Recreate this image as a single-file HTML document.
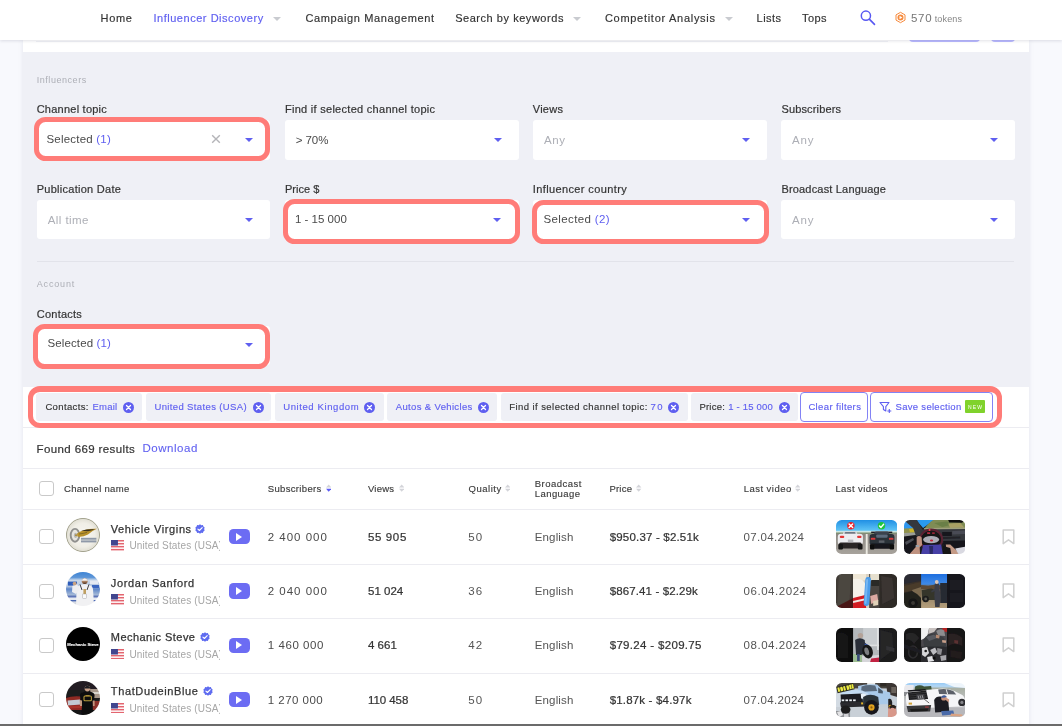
<!DOCTYPE html>
<html><head><meta charset="utf-8"><title>Influencer Discovery</title>
<style>
*{box-sizing:border-box;margin:0;padding:0}
html,body{width:1062px;height:726px;overflow:hidden}
body{background:#f8f9fd;font-family:"Liberation Sans",sans-serif;position:relative}
.a{position:absolute}
.t{position:absolute;white-space:nowrap;line-height:14px;height:14px;display:block;z-index:6}
.nav{left:0;top:0;width:1062px;height:40px;background:#fff;box-shadow:0 1px 3px rgba(40,40,80,.14);z-index:5}
.strip{left:23px;top:40px;width:1006px;height:12px;background:#fff}
.panel{left:23px;top:52px;width:1006px;height:335px;background:#eff0f6}
.white{left:23px;top:387px;width:1006px;height:339px;background:#fff}
.card{left:23px;top:40px;width:1006px;height:700px;box-shadow:0 0 5px rgba(90,100,140,.13)}
#tx{position:absolute;left:0;top:0;width:1062px;height:726px;z-index:6;will-change:transform}
.sel{height:39.6px;width:233.4px;background:#fff;border-radius:3px}
.hl{border:5.5px solid #ff7c78;border-radius:11.5px;z-index:4}
.arr{width:0;height:0;border-left:4px solid transparent;border-right:4px solid transparent;border-top:4.2px solid #5f5ff0}
.car{width:0;height:0;border-left:4px solid transparent;border-right:4px solid transparent;border-top:4px solid #c9cbd0}
.hr{height:1px;background:#ececf1}
.chip{top:393.1px;height:27.8px;background:#eff0f6;border-radius:3px}
.btn{top:392px;height:30px;background:#fff;border:1px solid #8383f5;border-radius:4px}
.cb{width:15px;height:15px;border:1.5px solid #c9c9c9;border-radius:3px;background:#fff}
.av{width:34px;height:34px;will-change:transform}
.th{width:61.3px;height:34px}
.cov{left:220px;width:8px;height:14px;background:#fff;z-index:7}
</style></head><body>
<div class="a nav"></div>
<div class="a card"></div>
<div class="a strip"></div>
<div class="a panel"></div>
<div class="a white"></div>
<div class="a" style="left:36px;top:40.5px;width:852px;height:1.5px;background:#f1f2f6"></div>
<div class="a" style="left:909px;top:38px;width:71px;height:4px;background:#b9b9ff;border-radius:0 0 4px 4px"></div>
<div class="a" style="left:991px;top:38px;width:24px;height:4px;background:#b9b9ff;border-radius:0 0 4px 4px"></div>
<div class="a car" style="left:273.3px;top:17px;z-index:6"></div>
<div class="a car" style="left:572.8px;top:17px;z-index:6"></div>
<div class="a car" style="left:725.2px;top:17px;z-index:6"></div>
<svg class="a" style="left:859px;top:9px;z-index:6" width="18" height="18" viewBox="0 0 18 18"><circle cx="6.9" cy="6.7" r="4.6" fill="none" stroke="#5858f2" stroke-width="1.5"/><path d="M10.3 10.1 L15.5 15.4" stroke="#5858f2" stroke-width="1.6" stroke-linecap="round"/></svg>
<svg class="a" style="left:894px;top:11.2px;z-index:6" width="13" height="13" viewBox="0 0 13 13"><path d="M6.5 1.3 L11 3.9 V9.1 L6.5 11.7 L2 9.1 V3.9 Z" fill="#fff" stroke="#f78a3c" stroke-width="1" stroke-linejoin="round"/><circle cx="6.5" cy="6.5" r="3.0" fill="#f78a3c"/><path d="M5.5 4.7 L8.4 6.5 L5.5 8.3 Z" fill="#fff"/></svg>
<div class="a sel" style="left:37.1px;top:120px"></div>
<div class="a arr" style="left:245.4px;top:137.6px"></div>
<div class="a sel" style="left:37.1px;top:199.9px"></div>
<div class="a arr" style="left:245.2px;top:217.9px"></div>
<div class="a sel" style="left:285.2px;top:120px"></div>
<div class="a arr" style="left:493.5px;top:137.6px"></div>
<div class="a sel" style="left:285.2px;top:199.9px"></div>
<div class="a arr" style="left:493.29999999999995px;top:217.9px"></div>
<div class="a sel" style="left:533.4px;top:120px"></div>
<div class="a arr" style="left:741.7px;top:137.6px"></div>
<div class="a sel" style="left:533.4px;top:199.9px"></div>
<div class="a arr" style="left:741.5px;top:217.9px"></div>
<div class="a sel" style="left:781.4px;top:120px"></div>
<div class="a arr" style="left:989.7px;top:137.6px"></div>
<div class="a sel" style="left:781.4px;top:199.9px"></div>
<div class="a arr" style="left:989.5px;top:217.9px"></div>
<div class="a sel" style="left:37.1px;top:325.5px"></div>
<div class="a arr" style="left:245.3px;top:343px"></div>
<svg class="a" style="left:211.3px;top:134.4px" width="10" height="10" viewBox="0 0 10 10"><path d="M1.2 1.2 L8.8 8.8 M8.8 1.2 L1.2 8.8" stroke="#b4b4b8" stroke-width="1.4"/></svg>
<div class="a hr" style="left:37px;top:261px;width:977px;background:#e2e3ea"></div>
<div class="a hl" style="left:33.7px;top:117.1px;width:236.7px;height:43.7px"></div>
<div class="a hl" style="left:283.2px;top:199.3px;width:237.2px;height:44.3px"></div>
<div class="a hl" style="left:532.2px;top:199.5px;width:237px;height:44.1px"></div>
<div class="a hl" style="left:32.7px;top:324.1px;width:237.2px;height:44.5px"></div>
<div class="a hl" style="left:27.7px;top:385.9px;width:974.3px;height:42.1px;border-radius:12px;border-top-width:6.2px"></div>
<div class="a chip" style="left:35.9px;width:105.9px"></div>
<svg class="a" style="left:123.19999999999999px;top:401.5px" width="11" height="11" viewBox="0 0 11 11"><circle cx="5.5" cy="5.5" r="5.5" fill="#5f5ff0"/><path d="M3.5 3.5 L7.5 7.5 M7.5 3.5 L3.5 7.5" stroke="#fff" stroke-width="1.3" stroke-linecap="round"/></svg>
<div class="a chip" style="left:146px;width:125px"></div>
<svg class="a" style="left:252.5px;top:401.5px" width="11" height="11" viewBox="0 0 11 11"><circle cx="5.5" cy="5.5" r="5.5" fill="#5f5ff0"/><path d="M3.5 3.5 L7.5 7.5 M7.5 3.5 L3.5 7.5" stroke="#fff" stroke-width="1.3" stroke-linecap="round"/></svg>
<div class="a chip" style="left:275px;width:108.5px"></div>
<svg class="a" style="left:364.4px;top:401.5px" width="11" height="11" viewBox="0 0 11 11"><circle cx="5.5" cy="5.5" r="5.5" fill="#5f5ff0"/><path d="M3.5 3.5 L7.5 7.5 M7.5 3.5 L3.5 7.5" stroke="#fff" stroke-width="1.3" stroke-linecap="round"/></svg>
<div class="a chip" style="left:387px;width:110px"></div>
<svg class="a" style="left:477.7px;top:401.5px" width="11" height="11" viewBox="0 0 11 11"><circle cx="5.5" cy="5.5" r="5.5" fill="#5f5ff0"/><path d="M3.5 3.5 L7.5 7.5 M7.5 3.5 L3.5 7.5" stroke="#fff" stroke-width="1.3" stroke-linecap="round"/></svg>
<div class="a chip" style="left:500.5px;width:187.20000000000005px"></div>
<svg class="a" style="left:667.9px;top:401.5px" width="11" height="11" viewBox="0 0 11 11"><circle cx="5.5" cy="5.5" r="5.5" fill="#5f5ff0"/><path d="M3.5 3.5 L7.5 7.5 M7.5 3.5 L3.5 7.5" stroke="#fff" stroke-width="1.3" stroke-linecap="round"/></svg>
<div class="a chip" style="left:691px;width:106.60000000000002px"></div>
<svg class="a" style="left:778.8px;top:401.5px" width="11" height="11" viewBox="0 0 11 11"><circle cx="5.5" cy="5.5" r="5.5" fill="#5f5ff0"/><path d="M3.5 3.5 L7.5 7.5 M7.5 3.5 L3.5 7.5" stroke="#fff" stroke-width="1.3" stroke-linecap="round"/></svg>
<div class="a btn" style="left:800.4px;width:67.8px"></div>
<div class="a btn" style="left:870.2px;width:123.2px"></div>
<svg class="a" style="left:879px;top:400.5px" width="13" height="13" viewBox="0 0 13 13"><path d="M1 1.5 H10 L6.8 5.6 V10 L4.4 8.6 V5.6 Z" fill="none" stroke="#5f5ff0" stroke-width="1.1" stroke-linejoin="round"/><path d="M10.3 8 V12 M8.3 10 H12.3" stroke="#5f5ff0" stroke-width="1.1"/></svg>
<div class="a" style="left:965.1px;top:400.1px;width:19.8px;height:13px;background:#80d22c;border-radius:1px"></div>
<div class="a hr" style="left:23px;top:427px;width:1006px"></div>
<div class="a hr" style="left:23px;top:468px;width:1006px"></div>
<div class="a hr" style="left:23px;top:509px;width:1006px"></div>
<div class="a hr" style="left:23px;top:564px;width:1006px"></div>
<div class="a hr" style="left:23px;top:618px;width:1006px"></div>
<div class="a hr" style="left:23px;top:673px;width:1006px"></div>
<div class="a cb" style="left:39px;top:481.3px"></div>
<svg class="a" style="left:325.7px;top:484.4px" width="5.4" height="8.2" viewBox="0 0 5.4 8.2"><path d="M0 3.4 L2.7 0.4 L5.4 3.4 Z" fill="#d3d4d9"/><path d="M0 4.7 L2.7 7.8 L5.4 4.7 Z" fill="#5a5af5"/></svg>
<svg class="a" style="left:398.5px;top:484.4px" width="5.4" height="8.2" viewBox="0 0 5.4 8.2"><path d="M0 3.4 L2.7 0.4 L5.4 3.4 Z" fill="#d3d4d9"/><path d="M0 4.7 L2.7 7.8 L5.4 4.7 Z" fill="#d3d4d9"/></svg>
<svg class="a" style="left:505.0px;top:484.4px" width="5.4" height="8.2" viewBox="0 0 5.4 8.2"><path d="M0 3.4 L2.7 0.4 L5.4 3.4 Z" fill="#d3d4d9"/><path d="M0 4.7 L2.7 7.8 L5.4 4.7 Z" fill="#d3d4d9"/></svg>
<svg class="a" style="left:636.2px;top:484.4px" width="5.4" height="8.2" viewBox="0 0 5.4 8.2"><path d="M0 3.4 L2.7 0.4 L5.4 3.4 Z" fill="#d3d4d9"/><path d="M0 4.7 L2.7 7.8 L5.4 4.7 Z" fill="#d3d4d9"/></svg>
<svg class="a" style="left:794.8px;top:484.4px" width="5.4" height="8.2" viewBox="0 0 5.4 8.2"><path d="M0 3.4 L2.7 0.4 L5.4 3.4 Z" fill="#d3d4d9"/><path d="M0 4.7 L2.7 7.8 L5.4 4.7 Z" fill="#d3d4d9"/></svg>
<svg width="0" height="0" style="position:absolute"><defs><filter id="bl" x="-5%" y="-5%" width="110%" height="110%"><feGaussianBlur stdDeviation="0.45"/></filter><filter id="bl2" x="-5%" y="-5%" width="110%" height="110%"><feGaussianBlur stdDeviation="0.8"/></filter><clipPath id="ct"><rect width="61" height="34" rx="5.6"/></clipPath><clipPath id="ca"><circle cx="17" cy="17" r="17"/></clipPath><linearGradient id="g1" x1="0" y1="0" x2="0" y2="1"><stop offset="0" stop-color="#1585e0"/><stop offset="0.32" stop-color="#5cc2f5"/><stop offset="0.36" stop-color="#d8ece4"/><stop offset="0.40" stop-color="#7d8f70"/><stop offset="0.43" stop-color="#8c8984"/><stop offset="1" stop-color="#aaa59e"/></linearGradient><linearGradient id="g4" x1="0" y1="0" x2="0" y2="1"><stop offset="0" stop-color="#1f6fe0"/><stop offset="0.3" stop-color="#3f8ae6"/><stop offset="0.36" stop-color="#6a5a48"/><stop offset="0.5" stop-color="#8a7a60"/><stop offset="1" stop-color="#b59f7c"/></linearGradient><linearGradient id="g8" x1="0" y1="0" x2="0" y2="1"><stop offset="0" stop-color="#86c2f4"/><stop offset="0.14" stop-color="#b4d8f6"/><stop offset="0.2" stop-color="#a9b0a4"/><stop offset="0.55" stop-color="#c4c4c8"/><stop offset="1" stop-color="#b4b4b8"/></linearGradient><linearGradient id="ga2" x1="0" y1="0" x2="0" y2="1"><stop offset="0" stop-color="#3d83d4"/><stop offset="0.16" stop-color="#5e96d8"/><stop offset="0.24" stop-color="#c9d8ea"/><stop offset="0.42" stop-color="#b4c6e0"/><stop offset="0.5" stop-color="#5e86c8"/><stop offset="0.68" stop-color="#a9bcd8"/><stop offset="0.72" stop-color="#1f3f9c"/><stop offset="0.84" stop-color="#2346a4"/><stop offset="0.88" stop-color="#d9dde6"/><stop offset="1" stop-color="#c4c9d4"/></linearGradient><radialGradient id="ga1" cx="0.5" cy="0.5" r="0.5"><stop offset="0" stop-color="#f7f6f1"/><stop offset="0.7" stop-color="#f0eee6"/><stop offset="1" stop-color="#dedcd0"/></radialGradient></defs></svg>
<div class="a cb" style="left:39px;top:529.45px"></div>
<div class="a av" style="left:66.1px;top:518.4px"><svg width="100%" height="100%" viewBox="0 0 34 34" style="display:block"><g clip-path="url(#ca)"><g filter="url(#bl)"><rect width="34" height="34" fill="url(#ga1)"/>
<ellipse cx="9" cy="17.3" rx="4.3" ry="6.4" fill="#e6e5e0" stroke="#8f8f8d" stroke-width="1.9"/><ellipse cx="9.6" cy="17.3" rx="1.7" ry="2.6" fill="#b5b5b2"/><circle cx="10" cy="17.2" r="0.9" fill="#a8842c"/>
<path d="M11 15.6 Q18 10.2 31 10.8 Q25 13.4 22 16.4 Q16 19.4 11.4 18.4 Z" fill="#b8912c"/><path d="M15 12.8 Q22 11 29 11.4 L22 13.2 Z" fill="#3a3122"/><path d="M13 16 Q17 15.6 21 14.4" stroke="#6d5a24" stroke-width="0.7" fill="none"/>
<rect x="15" y="19.8" width="15.4" height="1.9" fill="#8f99a8"/><rect x="15" y="22.4" width="15.4" height="2" fill="#8f99a8"/></g><circle cx="17" cy="17" r="16.6" fill="none" stroke="#8f8f78" stroke-width="0.8"/></g></svg></div>
<svg class="a" style="left:195px;top:523.5500000000001px" width="10" height="10" viewBox="0 0 20 20"><path d="M10 0.5 L12.6 2.3 L15.8 2.2 L16.8 5.2 L19.3 7.1 L18.3 10 L19.3 12.9 L16.8 14.8 L15.8 17.8 L12.6 17.7 L10 19.5 L7.4 17.7 L4.2 17.8 L3.2 14.8 L0.7 12.9 L1.7 10 L0.7 7.1 L3.2 5.2 L4.2 2.2 L7.4 2.3 Z" fill="#5f6cf0"/><path d="M5.8 10.2 L8.8 13 L14.4 7.2" fill="none" stroke="#fff" stroke-width="2.2" stroke-linecap="round" stroke-linejoin="round"/></svg>
<svg class="a" style="left:110.6px;top:540.1500000000001px" width="13.4" height="10.4" viewBox="0 0 27 20" preserveAspectRatio="none"><rect width="27" height="20" fill="#fff"/><g fill="#e3656f"><rect y="0" width="27" height="2.9"/><rect y="5.7" width="27" height="2.9"/><rect y="11.4" width="27" height="2.9"/><rect y="17.1" width="27" height="2.9"/></g><rect width="14" height="10.6" fill="#41468f"/></svg>
<div class="a cov" style="top:537.95px"></div>
<div class="a" style="left:228.6px;top:529.1500000000001px;width:21.6px;height:15.2px;background:#6c6cf3;border-radius:4.5px"></div>
<div class="a" style="left:236.4px;top:532.75px;width:0;height:0;border-top:4px solid transparent;border-bottom:4px solid transparent;border-left:6.5px solid #fff"></div>
<div class="a th" style="left:835.6px;top:519.95px"><svg width="100%" height="100%" viewBox="0 0 61 34" preserveAspectRatio="none" style="display:block"><g clip-path="url(#ct)"><g filter="url(#bl)"><rect x="-2" y="-2" width="65" height="38" fill="url(#g1)"/>
<rect x="29.6" y="14" width="1.9" height="21" fill="#eceae2"/>
<rect x="7" y="11.2" width="14" height="5" rx="2" fill="#d7d9dd"/><rect x="8.6" y="12" width="10.8" height="3" rx="1" fill="#707782"/>
<rect x="1.8" y="13.8" width="25" height="11" rx="3.2" fill="#ededf0"/>
<rect x="3" y="22.6" width="22.6" height="6" rx="1.6" fill="#2b2527"/>
<rect x="2.3" y="24" width="4.6" height="5.6" rx="1" fill="#151515"/><rect x="21.8" y="24" width="4.6" height="5.6" rx="1" fill="#151515"/>
<rect x="3.8" y="15.8" width="4.4" height="2.2" rx="1" fill="#e23434"/><rect x="21" y="15.8" width="4.4" height="2.2" rx="1" fill="#e23434"/>
<rect x="11.8" y="19.6" width="5.4" height="2.6" fill="#b9b9bd"/>
<rect x="35" y="11.6" width="21" height="1.5" fill="#1b1d21"/>
<rect x="38" y="11.6" width="15" height="5" rx="2" fill="#3a434e"/>
<rect x="33.4" y="14" width="24.8" height="11.4" rx="3.2" fill="#2a3039"/>
<rect x="40" y="14.6" width="11.4" height="3.2" rx="1" fill="#5b6a7b"/>
<rect x="34.6" y="17.8" width="4.6" height="2" rx="0.9" fill="#d83c3c"/><rect x="52.6" y="17.8" width="4.6" height="2" rx="0.9" fill="#d83c3c"/>
<rect x="34.4" y="23.4" width="22.8" height="5.4" rx="1.4" fill="#14161a"/>
<rect x="33.8" y="24.4" width="4.4" height="5.2" rx="1" fill="#101010"/><rect x="53.4" y="24.4" width="4.4" height="5.2" rx="1" fill="#101010"/>
<rect x="42.6" y="20.4" width="5.6" height="2.4" fill="#5a5f66"/>
<circle cx="14.8" cy="5.8" r="3.7" fill="#e8242c"/><path d="M13 4 L16.6 7.6 M16.6 4 L13 7.6" stroke="#fff" stroke-width="1.4" stroke-linecap="round"/>
<circle cx="45.3" cy="5.8" r="3.7" fill="#1fc63c"/><path d="M43.3 5.9 L44.8 7.4 L47.4 4.3" fill="none" stroke="#fff" stroke-width="1.4" stroke-linecap="round" stroke-linejoin="round"/></g></g></svg></div>
<div class="a th" style="left:903.9px;top:519.95px"><svg width="100%" height="100%" viewBox="0 0 61 34" preserveAspectRatio="none" style="display:block"><g clip-path="url(#ct)"><g filter="url(#bl)"><rect x="-2" y="-2" width="65" height="38" fill="#1d1d22"/>
<path d="M0 2 H10 L14 9 H0 Z" fill="#2f96ee"/>
<path d="M0 8.4 L13 8 L16 15 L0 16 Z" fill="#8f9250"/><path d="M5 9 L10 8.6 L11 12 L6 12.6 Z" fill="#c9b42c"/><path d="M0 13 L12 12.4 L14 16 L0 17.4 Z" fill="#9a9c98"/>
<path d="M0 16.4 L15 14.6 L16 22 L9 34 H0 Z" fill="#17171b"/><path d="M1 22 L9 18 L10 20 L2 25 Z" fill="#4b4d55"/>
<path d="M12 0 H30 L19 8 Z" fill="#2a9af0"/>
<path d="M29 0 L62 0 V10 L20 9.6 Q22 5 29 0 Z" fill="#7f8c54"/><path d="M30 3 L42 1.6 L50 4 L38 7 Z" fill="#6a7f46"/><path d="M44 3.6 L56 3 L60 7.6 L46 8 Z" fill="#a89f64"/><path d="M20 8 L62 7.6 V10 L20 9.8 Z" fill="#9fa07c"/>
<path d="M44 0 H60 L58 2.8 L45 2.4 Z" fill="#0c0c0e"/>
<path d="M1 0 H13 L18 9 L17.6 15 L12 16 L9 8 L2 2 Z" fill="#36383d"/>
<path d="M17 9.4 L62 9 V21.4 L38 22.4 L17 16 Z" fill="#35373d"/><rect x="38" y="12" width="9.6" height="4" fill="#17191e"/><path d="M48 11 L61 10.4 V14 L48 14.6 Z" fill="#4a4c54"/><path d="M38 17 L56 16.4 L56 18.4 L38 19 Z" fill="#202228"/>
<path d="M39 21 L62 20.4 V28 L40 29 Z" fill="#17171c"/>
<ellipse cx="27" cy="19.4" rx="10.4" ry="9.2" fill="#141418"/>
<ellipse cx="27" cy="19.4" rx="11" ry="9.8" fill="none" stroke="#5a2232" stroke-width="2"/>
<rect x="24.6" y="8.8" width="1.6" height="2.2" fill="#ee3a44"/><rect x="23" y="12.4" width="3" height="1.4" fill="#d8324a"/><rect x="28" y="12.4" width="2.6" height="1.4" fill="#b82a3c"/>
<ellipse cx="27" cy="19.6" rx="8" ry="3.7" fill="#adadb6"/><ellipse cx="27.4" cy="20.4" rx="1.6" ry="1" fill="#c2283a"/>
<path d="M19 25 L37 24.6 L38.6 34 H17 Z" fill="#473fa6"/><path d="M25 26 L29 26 L28.6 34 H25.6 Z" fill="#2a2a66"/>
<path d="M12.6 17 Q15 15 17.6 17.4 L18 25 L15.6 27.6 L16 34 H5.6 L12.6 26 Z" fill="#bf9280"/><rect x="11.6" y="25" width="3.4" height="2" fill="#9aa0aa"/>
<path d="M41.6 24.4 L46 24.6 L53.4 31.6 L54 34 H47 L42 27.4 Z" fill="#c49a86"/>
<path d="M38.6 26 L46 28 L47 34 H39 Z" fill="#121216"/>
<path d="M51 28.4 L62 26.6 V34 H54 Z" fill="#d9d9e1"/></g></g></svg></div>
<svg class="a" style="left:1001.5px;top:528.95px" width="13" height="16" viewBox="0 0 13 16"><path d="M1.2 1 H11.8 V14.6 L6.5 10.8 L1.2 14.6 Z" fill="none" stroke="#d0d0d0" stroke-width="1.5" stroke-linejoin="round"/></svg>
<div class="a cb" style="left:39px;top:583.7px"></div>
<div class="a av" style="left:66.1px;top:572.3px"><svg width="100%" height="100%" viewBox="0 0 34 34" style="display:block"><g clip-path="url(#ca)"><g filter="url(#bl)"><rect width="34" height="34" fill="url(#ga2)"/>
<rect x="2" y="9.6" width="9" height="4" fill="#2d5cba"/><rect x="24" y="8.6" width="8" height="3.4" fill="#e4e9f2"/><rect x="26" y="13" width="7" height="3" fill="#3a66c0"/>
<rect x="0" y="24.6" width="34" height="1.2" fill="#e8ebf2" opacity="0.8"/><rect x="2" y="26" width="9" height="2.2" fill="#e6e9f0"/><rect x="24" y="26" width="8" height="2.2" fill="#e6e9f0"/>
<path d="M10.6 17 Q11 12.6 18.6 12.2 Q26.4 12.6 27 17 L28 34 H10 Z" fill="#f1f1f3"/>
<path d="M14 12.4 L16 18 M23 12.4 L21 18" stroke="#2a2a30" stroke-width="0.9"/>
<circle cx="18.7" cy="9.2" r="2.9" fill="#a87e5e"/><path d="M15.8 8 Q18.7 4.6 21.6 8 L21.6 8.8 H15.8 Z" fill="#f4f4f6"/><path d="M16.4 10.4 Q18.7 13.6 21 10.4 Z" fill="#5a4030"/>
<path d="M6.4 14 L11 12 L13.6 17 L10 22 L6 20 Z" fill="#eeeef1"/><circle cx="8.6" cy="11.6" r="1.9" fill="#c9a282"/>
<rect x="17.4" y="17" width="2.6" height="5" fill="#c0a060"/><rect x="16.8" y="22" width="3.6" height="4.4" fill="#fafafa" stroke="#9a9a9e" stroke-width="0.4"/></g></g></svg></div>
<svg class="a" style="left:110.6px;top:594.4000000000001px" width="13.4" height="10.4" viewBox="0 0 27 20" preserveAspectRatio="none"><rect width="27" height="20" fill="#fff"/><g fill="#e3656f"><rect y="0" width="27" height="2.9"/><rect y="5.7" width="27" height="2.9"/><rect y="11.4" width="27" height="2.9"/><rect y="17.1" width="27" height="2.9"/></g><rect width="14" height="10.6" fill="#41468f"/></svg>
<div class="a cov" style="top:592.2px"></div>
<div class="a" style="left:228.6px;top:583.4000000000001px;width:21.6px;height:15.2px;background:#6c6cf3;border-radius:4.5px"></div>
<div class="a" style="left:236.4px;top:587.0px;width:0;height:0;border-top:4px solid transparent;border-bottom:4px solid transparent;border-left:6.5px solid #fff"></div>
<div class="a th" style="left:835.6px;top:574.2px"><svg width="100%" height="100%" viewBox="0 0 61 34" preserveAspectRatio="none" style="display:block"><g clip-path="url(#ct)"><g filter="url(#bl)"><rect x="-2" y="-2" width="65" height="38" fill="#37322e"/>
<path d="M0 0 H17 V34 H0 Z" fill="#403b36"/><path d="M3 0 L15 0 L13 34 L1 34 Z" fill="#4c4741"/><path d="M0 33 L17 24 V34 H0 Z" fill="#4a1917"/>
<rect x="17" y="0" width="26" height="34" fill="#d9d0c0"/>
<path d="M17 0 H30 V6 L17 8 Z" fill="#efe7d6"/>
<path d="M17 5 Q28 3 29.6 12 L29.4 23 L17 25 Z" fill="#f5f1ea"/>
<path d="M17 24 L29 21 L30 34 H17 Z" fill="#d21a22"/><path d="M17 27 L28 24.6 V26.4 L17 29 Z" fill="#f0e9e4"/>
<rect x="33" y="0" width="10" height="34" fill="#494540"/><rect x="34" y="0" width="9" height="7" fill="#e6e0cf"/><rect x="35" y="6" width="8" height="6" fill="#2c2a28"/>
<g transform="rotate(4 31 17)"><rect x="28.4" y="3" width="5.6" height="29" rx="2.6" fill="#4b9cea"/><rect x="29.2" y="5" width="2" height="25" rx="1" fill="#76b6f2"/></g>
<path d="M34 22 L41 20 L42 27 L35 30 Z" fill="#dcaaa2"/><path d="M37 27 L42 26 L42 31 L37 32 Z" fill="#e0d2b8"/>
<rect x="43" y="0" width="18" height="34" fill="#2d2927"/><path d="M45 2 L56 4 L58 24 L46 30 Z" fill="#3a3532"/></g></g></svg></div>
<div class="a th" style="left:903.9px;top:574.2px"><svg width="100%" height="100%" viewBox="0 0 61 34" preserveAspectRatio="none" style="display:block"><g clip-path="url(#ct)"><g filter="url(#bl)"><rect x="-2" y="-2" width="65" height="38" fill="#17171b"/>
<rect x="0" y="0" width="17" height="34" fill="#3b3129"/><path d="M0 0 H17 V7 L0 10 Z" fill="#2b2a30"/><path d="M0 12 L17 8 V16 L0 18 Z" fill="#4a3b2c"/><path d="M8 16 L17 13 V24 L10 24 Z" fill="#7b6a50"/>
<path d="M0 19 L8 17 L13 20 L17 24 V34 H0 Z" fill="#24221f"/><circle cx="9" cy="29" r="4.6" fill="#131313"/><circle cx="9" cy="29" r="2" fill="#3a3834"/>
<rect x="17" y="0" width="26" height="34" fill="url(#g4)"/>
<path d="M17 11 L24 12 L31 10.6 L43 12.4 V15 H17 Z" fill="#5b4936"/>
<path d="M17.6 16 L27 14.6 L32 16 L32 26 L18 26 Z" fill="#34352c"/><circle cx="21.6" cy="25" r="3.2" fill="#1d1d1b"/><circle cx="21.6" cy="25" r="1.4" fill="#5b5a52"/>
<rect x="36" y="9" width="7" height="20" fill="#272a33"/>
<path d="M30.6 10 Q32.6 7 34.8 10 L36.4 22 L35.4 33 H31 L30.2 22 Z" fill="#3b3d46"/><circle cx="32.6" cy="8" r="1.9" fill="#dcc6b6"/>
<path d="M27 17 L31 14.6 L31.6 16.4 L27.6 18.6 Z" fill="#3b3d46"/>
<rect x="43" y="0" width="18" height="34" fill="#15151a"/><path d="M45 6 H59 V16 H45 Z" fill="#1c1c22"/><path d="M45 19 H59 V28 H45 Z" fill="#1b1b20"/></g></g></svg></div>
<svg class="a" style="left:1001.5px;top:583.2px" width="13" height="16" viewBox="0 0 13 16"><path d="M1.2 1 H11.8 V14.6 L6.5 10.8 L1.2 14.6 Z" fill="none" stroke="#d0d0d0" stroke-width="1.5" stroke-linejoin="round"/></svg>
<div class="a cb" style="left:39px;top:637.9px"></div>
<div class="a av" style="left:66.1px;top:627.1px"><svg width="100%" height="100%" viewBox="0 0 34 34" style="display:block"><g clip-path="url(#ca)"><g filter="url(#bl)"><rect width="34" height="34" fill="#000"/></g><text x="17" y="18.5" text-anchor="middle" font-family="Liberation Sans, sans-serif" font-weight="bold" font-size="4.1" fill="#fff" textLength="31.4" lengthAdjust="spacingAndGlyphs" stroke="#fff" stroke-width="0.1">Mechanic Steve</text></g></svg></div>
<svg class="a" style="left:199.6px;top:632.0px" width="10" height="10" viewBox="0 0 20 20"><path d="M10 0.5 L12.6 2.3 L15.8 2.2 L16.8 5.2 L19.3 7.1 L18.3 10 L19.3 12.9 L16.8 14.8 L15.8 17.8 L12.6 17.7 L10 19.5 L7.4 17.7 L4.2 17.8 L3.2 14.8 L0.7 12.9 L1.7 10 L0.7 7.1 L3.2 5.2 L4.2 2.2 L7.4 2.3 Z" fill="#5f6cf0"/><path d="M5.8 10.2 L8.8 13 L14.4 7.2" fill="none" stroke="#fff" stroke-width="2.2" stroke-linecap="round" stroke-linejoin="round"/></svg>
<svg class="a" style="left:110.6px;top:648.6px" width="13.4" height="10.4" viewBox="0 0 27 20" preserveAspectRatio="none"><rect width="27" height="20" fill="#fff"/><g fill="#e3656f"><rect y="0" width="27" height="2.9"/><rect y="5.7" width="27" height="2.9"/><rect y="11.4" width="27" height="2.9"/><rect y="17.1" width="27" height="2.9"/></g><rect width="14" height="10.6" fill="#41468f"/></svg>
<div class="a cov" style="top:646.4px"></div>
<div class="a" style="left:228.6px;top:637.6px;width:21.6px;height:15.2px;background:#6c6cf3;border-radius:4.5px"></div>
<div class="a" style="left:236.4px;top:641.1999999999999px;width:0;height:0;border-top:4px solid transparent;border-bottom:4px solid transparent;border-left:6.5px solid #fff"></div>
<div class="a th" style="left:835.6px;top:628.4px"><svg width="100%" height="100%" viewBox="0 0 61 34" preserveAspectRatio="none" style="display:block"><g clip-path="url(#ct)"><g filter="url(#bl)"><rect x="-2" y="-2" width="65" height="38" fill="#101011"/>
<rect x="0" y="0" width="17" height="34" fill="#0e0e0f"/><path d="M1 6 Q6 2 12 8 L12 30 L2 30 Z" fill="#161617"/>
<rect x="17" y="0" width="26" height="34" fill="#b4b8bb"/>
<rect x="27" y="0" width="14.6" height="17" fill="#c9cdd0"/><rect x="41" y="0" width="1.4" height="22" fill="#e9ebec"/><rect x="27" y="16.6" width="16" height="1.6" fill="#dfe1e2"/>
<path d="M17 26 H26 V34 H17 Z" fill="#9dbd92"/>
<path d="M26 28 L43 27 V34 H26 Z" fill="#d6d6da"/><path d="M35 30.6 L43 29.6 V34 H34 Z" fill="#c22443"/>
<circle cx="24.3" cy="7.6" r="2.7" fill="#b3a298"/>
<path d="M19 12 Q23.6 8.6 28.6 12 L29.6 25 L25 27 L20 27 Z" fill="#2a2e38"/>
<path d="M27 13 L32 17.6 L30.6 19.4 L26 16 Z" fill="#2a2e38"/><path d="M28.6 15.6 L32.6 17 L32 19.4 L28.6 18.6 Z" fill="#3d63c8"/>
<rect x="21" y="26" width="2.6" height="7" fill="#3a4a78"/>
<ellipse cx="31.4" cy="23.6" rx="5.2" ry="7" transform="rotate(-16 31.4 23.6)" fill="#161616"/><ellipse cx="30.6" cy="23.4" rx="2.2" ry="4" transform="rotate(-16 30.6 23.4)" fill="#7b7d80"/>
<rect x="43" y="0" width="18" height="34" fill="#1a1a1c"/><path d="M44 2 L56 5 L57 22 L44 32 Z" fill="#262628"/><path d="M50 18 L58 20 L58 24 L50 22 Z" fill="#333335"/></g></g></svg></div>
<div class="a th" style="left:903.9px;top:628.4px"><svg width="100%" height="100%" viewBox="0 0 61 34" preserveAspectRatio="none" style="display:block"><g clip-path="url(#ct)"><g filter="url(#bl)"><rect x="-2" y="-2" width="65" height="38" fill="#131214"/>
<rect x="0" y="0" width="17" height="34" fill="#151416"/><path d="M2 6 Q10 2 15 10 L10 16 Q6 10 2 12 Z" fill="#262527"/><ellipse cx="9" cy="24" rx="4.4" ry="6" fill="none" stroke="#2e2d2f" stroke-width="1.6"/><path d="M0 16 L17 22 V26 L0 20 Z" fill="#1f1e20"/>
<rect x="17" y="0" width="26" height="34" fill="#4b4a4e"/>
<path d="M17 0 H25 L23 9 L17 12 Z" fill="#f1f1f1"/><path d="M25 0 H33 L30 4 L24 6 Z" fill="#c8c2c0"/>
<path d="M38 0 H43 V4 L39 3.4 Z" fill="#b32323"/>
<path d="M19 12 Q24 4 33 6 L40 10 L42 18 L36 20 L20 19 Z" fill="#3a3c41"/><path d="M22 9 L30 6.6 L33 10 L25 13 Z" fill="#585a60"/>
<path d="M32 3 Q36 -0.4 40 2.4 L41 8 L34 7.4 Z" fill="#8d8d8f"/><path d="M31.6 6.6 L35.6 7.4 L35 10.6 L31.8 10 Z" fill="#b48a72"/>
<path d="M38 12 L42 12.6 L41.6 15 L38 14.6 Z" fill="#c9a08a"/>
<rect x="17" y="18.6" width="26" height="16" fill="#2a2a2d"/>
<path d="M18 20 L23 19 L25 25 L21 29 L18 27 Z" fill="#d6d6d9"/><path d="M26 22 L31 19.6 L33 24 L29 27 Z" fill="#bdbdc1"/><path d="M23 29 L28 28 L30 33 L24 34 Z" fill="#e2e2e5"/><path d="M33 20 L38 21 L37 27 L33 26 Z" fill="#8f8f93"/><path d="M36 28 L42 27 L42 32 L37 33 Z" fill="#a7a7ab"/><circle cx="30" cy="30" r="1.6" fill="#111"/><circle cx="21.6" cy="23" r="1.3" fill="#1a1a1a"/>
<rect x="43" y="0" width="18" height="34" fill="#181316"/><path d="M44 6 Q52 4 58 10 L58 18 Q50 14 44 18 Z" fill="#2a2022"/><path d="M46 22 L58 24 L57 31 L46 29 Z" fill="#221a1c"/><path d="M50 12 L54 12.6 L53.6 16 L50 15 Z" fill="#5a3030"/></g></g></svg></div>
<svg class="a" style="left:1001.5px;top:637.4px" width="13" height="16" viewBox="0 0 13 16"><path d="M1.2 1 H11.8 V14.6 L6.5 10.8 L1.2 14.6 Z" fill="none" stroke="#d0d0d0" stroke-width="1.5" stroke-linejoin="round"/></svg>
<div class="a cb" style="left:39px;top:692.2px"></div>
<div class="a av" style="left:66.1px;top:681.4px"><svg width="100%" height="100%" viewBox="0 0 34 34" style="display:block"><g clip-path="url(#ca)"><g filter="url(#bl)"><rect width="34" height="34" fill="#1b1a1c"/>
<path d="M0 0 H34 V9 H0 Z" fill="#201e20"/><path d="M24 8 H34 V17 H25 Z" fill="#a7978a"/><path d="M25 20 H34 V29 H26 Z" fill="#8c3129"/><path d="M26 11 H34 V13 H26 Z" fill="#d8d4cc"/>
<path d="M0 17 Q6 14.6 16 15.6 L17 29 H0 Z" fill="#8f2a24"/><path d="M1.6 19.6 L14 18.6 L14.6 23.6 L2 24.4 Z" fill="#c2cad2"/><path d="M0 25 L16 24.4 L16 27 L0 27.6 Z" fill="#a8342c"/>
<path d="M0 29 H34 V34 H0 Z" fill="#141315"/>
<path d="M14 13.6 Q15 10.6 21.6 10.4 Q28 10.6 28.6 14 L28 20 L26.6 20 L27 34 H15.6 L16 20 L14.4 20 Z" fill="#0f0f11"/>
<path d="M13.6 19 L16 19.4 L16 25 L14 25 Z" fill="#c29a80"/><path d="M26.8 19.6 L28.6 19.4 L28.6 25 L27 25 Z" fill="#c29a80"/>
<circle cx="21.4" cy="7.6" r="2.8" fill="#c9a088"/><path d="M18.4 6.8 Q21.4 2.6 24.4 6.8 L24.6 7.6 H18.2 Z" fill="#1c1c20"/>
<rect x="18" y="15" width="7.4" height="4.8" rx="1" fill="none" stroke="#b89a3a" stroke-width="1.1"/><rect x="19.6" y="14.2" width="4" height="1" fill="#b89a3a"/></g></g></svg></div>
<svg class="a" style="left:202.6px;top:686.3000000000001px" width="10" height="10" viewBox="0 0 20 20"><path d="M10 0.5 L12.6 2.3 L15.8 2.2 L16.8 5.2 L19.3 7.1 L18.3 10 L19.3 12.9 L16.8 14.8 L15.8 17.8 L12.6 17.7 L10 19.5 L7.4 17.7 L4.2 17.8 L3.2 14.8 L0.7 12.9 L1.7 10 L0.7 7.1 L3.2 5.2 L4.2 2.2 L7.4 2.3 Z" fill="#5f6cf0"/><path d="M5.8 10.2 L8.8 13 L14.4 7.2" fill="none" stroke="#fff" stroke-width="2.2" stroke-linecap="round" stroke-linejoin="round"/></svg>
<svg class="a" style="left:110.6px;top:702.9000000000001px" width="13.4" height="10.4" viewBox="0 0 27 20" preserveAspectRatio="none"><rect width="27" height="20" fill="#fff"/><g fill="#e3656f"><rect y="0" width="27" height="2.9"/><rect y="5.7" width="27" height="2.9"/><rect y="11.4" width="27" height="2.9"/><rect y="17.1" width="27" height="2.9"/></g><rect width="14" height="10.6" fill="#41468f"/></svg>
<div class="a cov" style="top:700.7px"></div>
<div class="a" style="left:228.6px;top:691.9000000000001px;width:21.6px;height:15.2px;background:#6c6cf3;border-radius:4.5px"></div>
<div class="a" style="left:236.4px;top:695.5px;width:0;height:0;border-top:4px solid transparent;border-bottom:4px solid transparent;border-left:6.5px solid #fff"></div>
<div class="a th" style="left:835.6px;top:682.7px"><svg width="100%" height="100%" viewBox="0 0 61 34" preserveAspectRatio="none" style="display:block"><g clip-path="url(#ct)"><g filter="url(#bl)"><rect x="-2" y="-2" width="65" height="38" fill="#c6cfd8"/>
<rect x="0" y="0" width="61" height="5.4" fill="#4a4540"/><rect x="31" y="0" width="8" height="3" fill="#ecebe8"/><rect x="44" y="0" width="10" height="3.4" fill="#2e2b28"/>
<path d="M50 0 H61 V14 L51 11 Z" fill="#3a3531"/><rect x="55" y="4" width="5" height="6" fill="#6a645c"/>
<rect x="0" y="5" width="5" height="20" fill="#d3dbe3"/>
<path d="M0 24 H61 V34 H0 Z" fill="#c9d0d7"/><path d="M0 28 H14 V34 H0 Z" fill="#8e9094"/><path d="M1 29 L5 28 L7 32 L3 34 Z" fill="#e4e4e6"/><path d="M8 30 L12 29.6 L12.6 34 H8 Z" fill="#d4d4d8"/>
<path d="M22 3 Q30 0.4 41 1.6 L47 7.4 L54 9.6 L54.6 21 L22 22 Z" fill="#a9c9e9"/>
<path d="M25.4 3.4 Q31 1.4 39 2.4 L41 8 L25 8.8 Z" fill="#5a6b7c"/><path d="M42 4.6 L46.6 8 L46.6 10.6 L42 10 Z" fill="#4a5868"/>
<path d="M4.6 9.6 Q14 5.6 26 7.6 L32 10.6 L30 14 L6 14 Z" fill="#c3daf1"/>
<path d="M4.6 11.6 L26 10.4 L27 20 L5 21 Z" fill="#1b1d21"/><rect x="5.6" y="16.4" width="2.6" height="1.8" fill="#eef2f6"/><rect x="9.4" y="16.4" width="2.6" height="1.8" fill="#eef2f6"/><rect x="13.2" y="16.4" width="2.6" height="1.8" fill="#eef2f6"/><rect x="17" y="16.4" width="2.6" height="1.8" fill="#eef2f6"/>
<path d="M24.6 10.4 L29.6 11 L29 16 L25 15.6 Z" fill="#e9f1f8"/>
<path d="M4 19.6 L29 18.6 L30 23.6 L5 24.6 Z" fill="#2a2b2e"/><rect x="25" y="19.4" width="3.6" height="2" fill="#e3b42a"/>
<path d="M27 14 Q34 9.6 42 14 L43 22 L27 22 Z" fill="#2c3138"/>
<circle cx="35.3" cy="24.4" r="7.3" fill="#19191a"/><circle cx="35.3" cy="24.4" r="3.1" fill="#e2a21e"/><circle cx="35.3" cy="24.4" r="1.1" fill="#8a5e10"/>
<ellipse cx="9.6" cy="26.6" rx="4.8" ry="4.2" fill="#1d1d1e"/>
<path d="M52 16 Q55.6 14.6 56 20 L55 27 L52 26 Z" fill="#232325"/><circle cx="54" cy="23.4" r="1.7" fill="#d39a22"/>
<g transform="rotate(-13 9 5)"><rect x="0.6" y="2" width="17.4" height="6.4" fill="#2a2a20"/><rect x="1.6" y="3" width="2" height="4.4" fill="#ecea42"/><rect x="4.2" y="3" width="2.6" height="4.4" rx="1.2" fill="#ecea42"/><rect x="7.4" y="3" width="2" height="4.4" fill="#ecea42"/><rect x="10.6" y="3" width="2.4" height="4.4" fill="#ecea42"/><rect x="13.4" y="3" width="2" height="4.4" fill="#ecea42"/><rect x="15.8" y="3" width="1.8" height="4.4" fill="#ecea42"/></g>
<path d="M52 25 Q56 21.6 59.6 25 L61 34 H51.6 Z" fill="#d8988a"/><path d="M53 23.6 Q56.4 20 60 23.6 L59 26 Q56 23.6 53.6 26 Z" fill="#2a201c"/></g></g></svg></div>
<div class="a th" style="left:903.9px;top:682.7px"><svg width="100%" height="100%" viewBox="0 0 61 34" preserveAspectRatio="none" style="display:block"><g clip-path="url(#ct)"><g filter="url(#bl)"><rect x="-2" y="-2" width="65" height="38" fill="url(#g8)"/>
<path d="M40 0 H61 V5 L50 4 Z" fill="#eef5fb"/>
<path d="M11 3.6 Q16 1 20 3.6 L27 3 L27.6 7 H11 Z" fill="#3d5238"/>
<path d="M0 2 H9.6 V13 H0 Z" fill="#e9e9ed"/><path d="M0 9 H8 V13 H0 Z" fill="#8a8c90"/>
<path d="M0 25 H61 V34 H0 Z" fill="#b7b7bb"/>
<path d="M2 12 Q4 8 14 7.4 L33 6 Q42 4.6 50 8 L58 12 Q61 14 60.6 20 L58 23.6 L4 25.6 Q1.6 22 2 12 Z" fill="#f5f5f7"/>
<path d="M34 6.6 Q42 5 49 8 L52 11.4 L35 11 Z" fill="#5b6169"/><path d="M42 6.4 L43.4 11.2" stroke="#e9e9eb" stroke-width="1"/>
<path d="M3.6 7.2 L21 6 L22.6 7.4 L4.6 8.8 Z" fill="#18181a"/>
<path d="M4 9.6 L22 7.6 L24 16 L5 17 Z" fill="#1c1c1f"/><path d="M5 11 L22 9.4 M5.4 13 L22.6 11.6 M5.8 15 L23.2 13.8" stroke="#4a4a4e" stroke-width="0.5"/>
<path d="M12 11.6 L20 11 L21 16 L13 16.6 Z" fill="#3d3d42"/><path d="M14 12.6 L15 16 M16 12.4 L17 15.8 M18 12.2 L19 15.6" stroke="#d8d8dc" stroke-width="0.6"/>
<path d="M20 16 L25 20" stroke="#2a2a2c" stroke-width="0.7"/>
<rect x="4.6" y="19.6" width="3.4" height="2" fill="#d2a23a"/>
<path d="M2.6 23 L27 22 L26 28.6 L4 29 Z" fill="#38383b"/><path d="M6 26 L24 25.4 L23.4 28 L7 28.4 Z" fill="#1c1c1e"/><rect x="21" y="23.6" width="3.6" height="0.9" fill="#d23a3a"/>
<circle cx="57.6" cy="19.4" r="3.6" fill="#2f2f33"/><circle cx="57.6" cy="19.4" r="1.6" fill="#85858a"/>
<path d="M30 17 Q32 13 36.6 13.6 L44 17 L45 28.6 L31 29.6 Z" fill="#1b1d21"/>
<circle cx="39.6" cy="15" r="2.6" fill="#c8907a"/><path d="M36.8 14 Q39.6 10.6 42.4 13.4 L42 14.6 L37 14.8 Z" fill="#3a5b9c"/>
<path d="M41 14 L45 16.6 L44.4 19.6 L41.6 17 Z" fill="#cf9a84"/>
<path d="M37 28 L49 27.4 L50 31.6 L38 32.4 Z" fill="#4a6aa9"/>
<path d="M47 30.4 L58 31.6 L58 33.6 L46 33 Z" fill="#d9a282"/></g></g></svg></div>
<svg class="a" style="left:1001.5px;top:691.7px" width="13" height="16" viewBox="0 0 13 16"><path d="M1.2 1 H11.8 V14.6 L6.5 10.8 L1.2 14.6 Z" fill="none" stroke="#d0d0d0" stroke-width="1.5" stroke-linejoin="round"/></svg>
<div id="tx">
<span class="t" style="left:100.60px;top:11px;font-size:11px;color:#333;letter-spacing:0.619px;-webkit-text-stroke:0.17px #333;">Home</span>
<span class="t" style="left:153.40px;top:11px;font-size:11px;color:#5f5ff0;letter-spacing:0.534px;-webkit-text-stroke:0.17px #5f5ff0;">Influencer Discovery</span>
<span class="t" style="left:305.50px;top:11px;font-size:11px;color:#333;letter-spacing:0.616px;-webkit-text-stroke:0.17px #333;">Campaign Management</span>
<span class="t" style="left:455.20px;top:11px;font-size:11px;color:#333;letter-spacing:0.538px;-webkit-text-stroke:0.17px #333;">Search by keywords</span>
<span class="t" style="left:604.90px;top:11px;font-size:11px;color:#333;letter-spacing:0.716px;-webkit-text-stroke:0.17px #333;">Competitor Analysis</span>
<span class="t" style="left:756.60px;top:11px;font-size:11px;color:#333;letter-spacing:0.419px;-webkit-text-stroke:0.17px #333;">Lists</span>
<span class="t" style="left:802.00px;top:11px;font-size:11px;color:#333;letter-spacing:0.450px;-webkit-text-stroke:0.17px #333;">Tops</span>
<span class="t" style="left:911.00px;top:11px;font-size:11.5px;color:#757575;letter-spacing:0.706px;">570</span>
<span class="t" style="left:934.70px;top:12px;font-size:9px;color:#858585;letter-spacing:0.154px;">tokens</span>
<span class="t" style="left:36.70px;top:73px;font-size:9px;color:#adafb6;letter-spacing:0.547px;">Influencers</span>
<span class="t" style="left:36.70px;top:277px;font-size:9px;color:#adafb6;letter-spacing:0.845px;">Account</span>
<span class="t" style="left:36.70px;top:102px;font-size:11px;color:#333;letter-spacing:0.235px;-webkit-text-stroke:0.2px #333;">Channel topic</span>
<span class="t" style="left:284.90px;top:102px;font-size:11px;color:#333;letter-spacing:0.287px;-webkit-text-stroke:0.2px #333;">Find if selected channel topic</span>
<span class="t" style="left:532.80px;top:102px;font-size:11px;color:#333;letter-spacing:0.236px;-webkit-text-stroke:0.2px #333;">Views</span>
<span class="t" style="left:781.40px;top:102px;font-size:11px;color:#333;letter-spacing:0.152px;-webkit-text-stroke:0.2px #333;">Subscribers</span>
<span class="t" style="left:36.70px;top:182px;font-size:11px;color:#333;letter-spacing:0.273px;-webkit-text-stroke:0.2px #333;">Publication Date</span>
<span class="t" style="left:284.90px;top:182px;font-size:11px;color:#333;letter-spacing:0.025px;-webkit-text-stroke:0.2px #333;">Price $</span>
<span class="t" style="left:532.80px;top:182px;font-size:11px;color:#333;letter-spacing:0.380px;-webkit-text-stroke:0.2px #333;">Influencer country</span>
<span class="t" style="left:781.40px;top:182px;font-size:11px;color:#333;letter-spacing:0.181px;-webkit-text-stroke:0.2px #333;">Broadcast Language</span>
<span class="t" style="left:36.70px;top:307px;font-size:11px;color:#333;letter-spacing:0.254px;-webkit-text-stroke:0.2px #333;">Contacts</span>
<span class="t" style="left:46.40px;top:132px;font-size:11.5px;color:#4a4a4a;letter-spacing:0.217px;">Selected <span style="color:#5f5ff0">(1)</span></span>
<span class="t" style="left:295.80px;top:133px;font-size:11.5px;color:#4a4a4a;letter-spacing:-0.084px;">&gt; 70%</span>
<span class="t" style="left:544.00px;top:133px;font-size:11.5px;color:#adafb6;letter-spacing:0.586px;">Any</span>
<span class="t" style="left:792.00px;top:133px;font-size:11.5px;color:#adafb6;letter-spacing:0.836px;">Any</span>
<span class="t" style="left:47.70px;top:213px;font-size:11.5px;color:#adafb6;letter-spacing:0.442px;">All time</span>
<span class="t" style="left:294.90px;top:212px;font-size:11.5px;color:#4a4a4a;letter-spacing:0.011px;">1 - 15 000</span>
<span class="t" style="left:543.60px;top:212px;font-size:11.5px;color:#4a4a4a;letter-spacing:0.353px;">Selected <span style="color:#5f5ff0">(2)</span></span>
<span class="t" style="left:792.00px;top:213px;font-size:11.5px;color:#adafb6;letter-spacing:0.836px;">Any</span>
<span class="t" style="left:47.50px;top:336px;font-size:11.5px;color:#4a4a4a;letter-spacing:0.117px;">Selected <span style="color:#5f5ff0">(1)</span></span>
<span class="t" style="left:45.40px;top:400px;font-size:9.5px;color:#333;letter-spacing:0.357px;-webkit-text-stroke:0.15px #333;">Contacts:</span>
<span class="t" style="left:92.40px;top:400px;font-size:9.5px;color:#5f5ff0;letter-spacing:0.259px;-webkit-text-stroke:0.15px #5f5ff0;">Email</span>
<span class="t" style="left:154.40px;top:400px;font-size:9.5px;color:#5f5ff0;letter-spacing:0.375px;-webkit-text-stroke:0.15px #5f5ff0;">United States (USA)</span>
<span class="t" style="left:283.20px;top:400px;font-size:9.5px;color:#5f5ff0;letter-spacing:0.599px;-webkit-text-stroke:0.15px #5f5ff0;">United Kingdom</span>
<span class="t" style="left:395.80px;top:400px;font-size:9.5px;color:#5f5ff0;letter-spacing:0.347px;-webkit-text-stroke:0.15px #5f5ff0;">Autos &amp; Vehicles</span>
<span class="t" style="left:509.20px;top:400px;font-size:9.5px;color:#333;letter-spacing:0.435px;-webkit-text-stroke:0.15px #333;">Find if selected channel topic:</span>
<span class="t" style="left:650.40px;top:400px;font-size:9.5px;color:#5f5ff0;letter-spacing:1.522px;-webkit-text-stroke:0.15px #5f5ff0;">70</span>
<span class="t" style="left:699.40px;top:400px;font-size:9.5px;color:#333;letter-spacing:0.221px;-webkit-text-stroke:0.15px #333;">Price:</span>
<span class="t" style="left:728.20px;top:400px;font-size:9.5px;color:#5f5ff0;letter-spacing:0.200px;-webkit-text-stroke:0.15px #5f5ff0;">1 - 15 000</span>
<span class="t" style="left:808.40px;top:400px;font-size:9.5px;color:#5f5ff0;letter-spacing:0.371px;-webkit-text-stroke:0.15px #5f5ff0;">Clear filters</span>
<span class="t" style="left:895.60px;top:400px;font-size:9.5px;color:#5f5ff0;letter-spacing:0.293px;-webkit-text-stroke:0.15px #5f5ff0;">Save selection</span>
<span class="t" style="left:968.10px;top:400px;font-size:5px;color:#fff;letter-spacing:1.114px;">NEW</span>
<span class="t" style="left:36.50px;top:442px;font-size:11.5px;color:#333;letter-spacing:0.390px;-webkit-text-stroke:0.2px #333;">Found 669 results</span>
<span class="t" style="left:142.40px;top:441px;font-size:11.5px;color:#5f5ff0;letter-spacing:0.549px;-webkit-text-stroke:0.1px #5f5ff0;">Download</span>
<span class="t" style="left:64.00px;top:482px;font-size:9.5px;color:#3c3c3c;letter-spacing:0.309px;-webkit-text-stroke:0.15px #3c3c3c;">Channel name</span>
<span class="t" style="left:267.80px;top:482px;font-size:9.5px;color:#3c3c3c;letter-spacing:0.333px;-webkit-text-stroke:0.15px #3c3c3c;">Subscribers</span>
<span class="t" style="left:368.00px;top:482px;font-size:9.5px;color:#3c3c3c;letter-spacing:0.207px;-webkit-text-stroke:0.15px #3c3c3c;">Views</span>
<span class="t" style="left:468.50px;top:482px;font-size:9.5px;color:#3c3c3c;letter-spacing:0.537px;-webkit-text-stroke:0.15px #3c3c3c;">Quality</span>
<span class="t" style="left:534.80px;top:477px;font-size:9.5px;color:#3c3c3c;letter-spacing:0.490px;-webkit-text-stroke:0.15px #3c3c3c;">Broadcast</span>
<span class="t" style="left:534.80px;top:487px;font-size:9.5px;color:#3c3c3c;letter-spacing:0.417px;-webkit-text-stroke:0.15px #3c3c3c;">Language</span>
<span class="t" style="left:609.40px;top:482px;font-size:9.5px;color:#3c3c3c;letter-spacing:0.236px;-webkit-text-stroke:0.15px #3c3c3c;">Price</span>
<span class="t" style="left:743.70px;top:482px;font-size:9.5px;color:#3c3c3c;letter-spacing:0.465px;-webkit-text-stroke:0.15px #3c3c3c;">Last video</span>
<span class="t" style="left:835.40px;top:482px;font-size:9.5px;color:#3c3c3c;letter-spacing:0.414px;-webkit-text-stroke:0.15px #3c3c3c;">Last videos</span>
<span class="t" style="left:110.80px;top:522px;font-size:11px;color:#333;letter-spacing:0.596px;-webkit-text-stroke:0.25px #333;">Vehicle Virgins</span>
<span class="t" style="left:129.40px;top:539px;font-size:10px;color:#a6a6a6;letter-spacing:0.142px;">United States (USA)</span>
<span class="t" style="left:267.80px;top:530px;font-size:11.5px;color:#4a4a4a;letter-spacing:0.979px;">2 400 000</span>
<span class="t" style="left:368.00px;top:530px;font-size:11.5px;color:#333;letter-spacing:0.623px;-webkit-text-stroke:0.22px #333;">55 905</span>
<span class="t" style="left:468.30px;top:530px;font-size:11.5px;color:#555;letter-spacing:1.103px;">50</span>
<span class="t" style="left:534.70px;top:530px;font-size:11.5px;color:#555;letter-spacing:0.164px;">English</span>
<span class="t" style="left:609.70px;top:530px;font-size:11.5px;color:#333;letter-spacing:0.185px;-webkit-text-stroke:0.22px #333;">$950.37 - $2.51k</span>
<span class="t" style="left:743.60px;top:530px;font-size:11.5px;color:#555;letter-spacing:0.315px;">07.04.2024</span>
<span class="t" style="left:110.80px;top:576px;font-size:11px;color:#333;letter-spacing:0.629px;-webkit-text-stroke:0.25px #333;">Jordan Sanford</span>
<span class="t" style="left:129.40px;top:594px;font-size:10px;color:#a6a6a6;letter-spacing:0.142px;">United States (USA)</span>
<span class="t" style="left:267.80px;top:584px;font-size:11.5px;color:#4a4a4a;letter-spacing:0.979px;">2 040 000</span>
<span class="t" style="left:368.00px;top:584px;font-size:11.5px;color:#333;letter-spacing:0.002px;-webkit-text-stroke:0.22px #333;">51 024</span>
<span class="t" style="left:468.30px;top:584px;font-size:11.5px;color:#555;letter-spacing:1.103px;">36</span>
<span class="t" style="left:534.70px;top:584px;font-size:11.5px;color:#555;letter-spacing:0.164px;">English</span>
<span class="t" style="left:609.70px;top:584px;font-size:11.5px;color:#333;letter-spacing:0.118px;-webkit-text-stroke:0.22px #333;">$867.41 - $2.29k</span>
<span class="t" style="left:743.60px;top:584px;font-size:11.5px;color:#555;letter-spacing:0.537px;">06.04.2024</span>
<span class="t" style="left:110.80px;top:630px;font-size:11px;color:#333;letter-spacing:0.456px;-webkit-text-stroke:0.25px #333;">Mechanic Steve</span>
<span class="t" style="left:129.40px;top:648px;font-size:10px;color:#a6a6a6;letter-spacing:0.142px;">United States (USA)</span>
<span class="t" style="left:267.80px;top:638px;font-size:11.5px;color:#4a4a4a;letter-spacing:0.554px;">1 460 000</span>
<span class="t" style="left:368.00px;top:638px;font-size:11.5px;color:#333;letter-spacing:0.005px;-webkit-text-stroke:0.22px #333;">4 661</span>
<span class="t" style="left:468.30px;top:638px;font-size:11.5px;color:#555;letter-spacing:1.103px;">42</span>
<span class="t" style="left:534.70px;top:638px;font-size:11.5px;color:#555;letter-spacing:0.164px;">English</span>
<span class="t" style="left:609.70px;top:638px;font-size:11.5px;color:#333;letter-spacing:0.322px;-webkit-text-stroke:0.22px #333;">$79.24 - $209.75</span>
<span class="t" style="left:743.60px;top:638px;font-size:11.5px;color:#555;letter-spacing:0.537px;">08.04.2024</span>
<span class="t" style="left:110.80px;top:684px;font-size:11px;color:#333;letter-spacing:0.639px;-webkit-text-stroke:0.25px #333;">ThatDudeinBlue</span>
<span class="t" style="left:129.40px;top:702px;font-size:10px;color:#a6a6a6;letter-spacing:0.142px;">United States (USA)</span>
<span class="t" style="left:267.80px;top:693px;font-size:11.5px;color:#4a4a4a;letter-spacing:0.466px;">1 270 000</span>
<span class="t" style="left:368.00px;top:693px;font-size:11.5px;color:#333;letter-spacing:-0.070px;-webkit-text-stroke:0.22px #333;">110 458</span>
<span class="t" style="left:468.30px;top:693px;font-size:11.5px;color:#555;letter-spacing:1.103px;">50</span>
<span class="t" style="left:534.70px;top:693px;font-size:11.5px;color:#555;letter-spacing:0.164px;">English</span>
<span class="t" style="left:609.70px;top:693px;font-size:11.5px;color:#333;letter-spacing:0.173px;-webkit-text-stroke:0.22px #333;">$1.87k - $4.97k</span>
<span class="t" style="left:743.60px;top:693px;font-size:11.5px;color:#555;letter-spacing:0.315px;">07.04.2024</span>
</div>
<div class="a" style="left:0;top:724px;width:1062px;height:2px;background:#6b6b6b;z-index:9"></div>
</body></html>
